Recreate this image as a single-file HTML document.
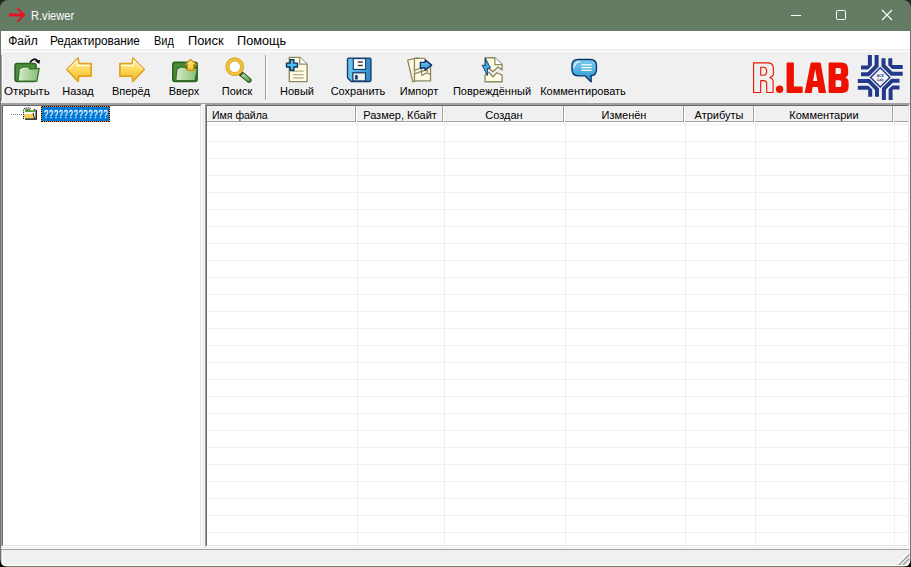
<!DOCTYPE html>
<html><head><meta charset="utf-8">
<style>
html,body{margin:0;padding:0;width:911px;height:567px;overflow:hidden;background:linear-gradient(#242424 0 50%,#000 50% 100%);}
*{box-sizing:border-box;}
.a{position:absolute;}
#win{position:absolute;left:0;top:0;width:911px;height:567px;border-radius:8px;overflow:hidden;background:#647c64;font-family:"Liberation Sans",sans-serif;}
.t{position:absolute;white-space:nowrap;color:#000;line-height:1;}
</style></head><body>
<div id="win">
  <!-- title bar -->
  <svg class="a" style="left:0;top:0" width="911" height="31">
    <g stroke="#e81123" fill="none">
      <line x1="9" y1="15" x2="23.5" y2="15" stroke-width="2.8"/>
      <polyline points="17.5,8.3 24.2,15 17.5,21.7" stroke-width="1.9"/>
    </g>
    <line x1="791" y1="15.5" x2="801" y2="15.5" stroke="#fff" stroke-width="1"/>
    <rect x="836.5" y="10.5" width="9" height="9" rx="1" fill="none" stroke="#fff" stroke-width="1"/>
    <g stroke="#fff" stroke-width="1.1"><line x1="882" y1="10" x2="892" y2="20"/><line x1="892" y1="10" x2="882" y2="20"/></g>
  </svg>
  <div class="t" style="left:30.8px;top:10px;font-size:12px;color:#fff;transform:scaleX(0.925);transform-origin:0 0">R.viewer</div>

  <!-- client -->
  <div class="a" style="left:1px;top:31px;width:909px;height:535px;background:#f0f0f0"></div>
  <!-- menu -->
  <div class="a" style="left:1px;top:31px;width:909px;height:18px;background:#fff"></div>
  <div class="a" style="left:1px;top:51px;width:909px;height:1px;background:#fff"></div>
  <div class="t" style="left:8.20px;top:35px;font-size:12px;transform:scaleX(1.000);transform-origin:0 0">Файл</div>
  <div class="t" style="left:50.42px;top:35px;font-size:12px;transform:scaleX(0.983);transform-origin:0 0">Редактирование</div>
  <div class="t" style="left:153.79px;top:35px;font-size:12px;transform:scaleX(0.910);transform-origin:0 0">Вид</div>
  <div class="t" style="left:187.53px;top:35px;font-size:12px;transform:scaleX(1.069);transform-origin:0 0">Поиск</div>
  <div class="t" style="left:236.94px;top:35px;font-size:12px;transform:scaleX(1.058);transform-origin:0 0">Помощь</div>

  <!-- toolbar bottom -->
  <div class="a" style="left:1px;top:103px;width:909px;height:1px;background:#a0a0a0"></div>
  <div class="a" style="left:1px;top:104px;width:909px;height:1px;background:#fff"></div>

  <!-- tree panel -->
  <div class="a" style="left:1px;top:104px;width:201px;height:443px;border-top:1px solid #a0a0a0;border-left:1px solid #a0a0a0;border-right:1px solid #fff;border-bottom:1px solid #fff;">
    <div class="a" style="left:0;top:0;right:0;bottom:0;border-top:1px solid #696969;border-left:1px solid #696969;border-right:1px solid #e3e3e3;border-bottom:1px solid #e3e3e3;background:#fff"></div>
  </div>
  <!-- list panel -->
  <div class="a" style="left:205px;top:104px;width:705px;height:443px;border-top:1px solid #a0a0a0;border-left:1px solid #a0a0a0;border-right:1px solid #fff;border-bottom:1px solid #fff;">
    <div class="a" style="left:0;top:0;right:0;bottom:0;border-top:1px solid #696969;border-left:1px solid #696969;border-right:1px solid #e3e3e3;border-bottom:1px solid #e3e3e3;background:#fff"></div>
  </div>
  <div class="a" style="left:1px;top:548px;width:909px;height:1px;background:#fafafa"></div>


  <div class="a" style="left:1px;top:55px;width:1px;height:46px;background:#a0a0a0"></div>
  <div class="a" style="left:2px;top:55px;width:1px;height:46px;background:#fff"></div>
  <div class="a" style="left:1px;top:101px;width:1px;height:2px;background:#fff"></div>
  <!-- toolbar labels -->
  <div class="t" style="left:3.8px;top:86px;font-size:11px;transform:scaleX(1.058);transform-origin:0 0">Открыть</div>
  <div class="t" style="left:18px;width:120px;text-align:center;top:86px;font-size:11px">Назад</div>
  <div class="t" style="left:71px;width:120px;text-align:center;top:86px;font-size:11px">Вперёд</div>
  <div class="t" style="left:124px;width:120px;text-align:center;top:86px;font-size:11px">Вверх</div>
  <div class="t" style="left:177px;width:120px;text-align:center;top:86px;font-size:11px">Поиск</div>
  <div class="t" style="left:237px;width:120px;text-align:center;top:86px;font-size:11px">Новый</div>
  <div class="t" style="left:298px;width:120px;text-align:center;top:86px;font-size:11px">Сохранить</div>
  <div class="t" style="left:359px;width:120px;text-align:center;top:86px;font-size:11px">Импорт</div>
  <div class="t" style="left:432px;width:120px;text-align:center;top:86px;font-size:11px">Повреждённый</div>
  <div class="t" style="left:523px;width:120px;text-align:center;top:86px;font-size:11px">Комментировать</div>
  <!-- separator -->
  <div class="a" style="left:265px;top:55px;width:1px;height:45px;background:#a0a0a0"></div>
  <div class="a" style="left:266px;top:55px;width:1px;height:45px;background:#fff"></div>

  <!-- list header -->
  <div class="a" style="left:207px;top:106px;width:701px;height:15px;background:#f0f0f0"></div>
  <div class="a" style="left:354px;top:106px;width:1px;height:14px;background:#f5f5f5"></div>
  <div class="a" style="left:208px;top:120px;width:147px;height:1px;background:#f5f5f5"></div>
  <div class="a" style="left:207px;top:106px;width:1px;height:16px;background:#fff"></div>
  <div class="a" style="left:355px;top:106px;width:1px;height:16px;background:#a0a0a0"></div>
  <div class="a" style="left:207px;top:121px;width:149px;height:1px;background:#a0a0a0"></div>
  <div class="a" style="left:441px;top:106px;width:1px;height:14px;background:#f5f5f5"></div>
  <div class="a" style="left:357px;top:120px;width:85px;height:1px;background:#f5f5f5"></div>
  <div class="a" style="left:356px;top:106px;width:1px;height:16px;background:#fff"></div>
  <div class="a" style="left:442px;top:106px;width:1px;height:16px;background:#a0a0a0"></div>
  <div class="a" style="left:357px;top:121px;width:86px;height:1px;background:#a0a0a0"></div>
  <div class="a" style="left:562px;top:106px;width:1px;height:14px;background:#f5f5f5"></div>
  <div class="a" style="left:444px;top:120px;width:119px;height:1px;background:#f5f5f5"></div>
  <div class="a" style="left:443px;top:106px;width:1px;height:16px;background:#fff"></div>
  <div class="a" style="left:563px;top:106px;width:1px;height:16px;background:#a0a0a0"></div>
  <div class="a" style="left:444px;top:121px;width:120px;height:1px;background:#a0a0a0"></div>
  <div class="a" style="left:682px;top:106px;width:1px;height:14px;background:#f5f5f5"></div>
  <div class="a" style="left:565px;top:120px;width:118px;height:1px;background:#f5f5f5"></div>
  <div class="a" style="left:564px;top:106px;width:1px;height:16px;background:#fff"></div>
  <div class="a" style="left:683px;top:106px;width:1px;height:16px;background:#a0a0a0"></div>
  <div class="a" style="left:565px;top:121px;width:119px;height:1px;background:#a0a0a0"></div>
  <div class="a" style="left:752px;top:106px;width:1px;height:14px;background:#f5f5f5"></div>
  <div class="a" style="left:685px;top:120px;width:68px;height:1px;background:#f5f5f5"></div>
  <div class="a" style="left:684px;top:106px;width:1px;height:16px;background:#fff"></div>
  <div class="a" style="left:753px;top:106px;width:1px;height:16px;background:#a0a0a0"></div>
  <div class="a" style="left:685px;top:121px;width:69px;height:1px;background:#a0a0a0"></div>
  <div class="a" style="left:891px;top:106px;width:1px;height:14px;background:#f5f5f5"></div>
  <div class="a" style="left:755px;top:120px;width:137px;height:1px;background:#f5f5f5"></div>
  <div class="a" style="left:754px;top:106px;width:1px;height:16px;background:#fff"></div>
  <div class="a" style="left:892px;top:106px;width:1px;height:16px;background:#a0a0a0"></div>
  <div class="a" style="left:755px;top:121px;width:138px;height:1px;background:#a0a0a0"></div>
  <div class="a" style="left:893px;top:106px;width:1px;height:16px;background:#fff"></div>
  <div class="a" style="left:894px;top:121px;width:14px;height:1px;background:#a0a0a0"></div>
  <svg class="a" style="left:207px;top:122px" width="701" height="423">
    <path d="M0 2.5H701M0 19.5H701M0 36.5H701M0 53.5H701M0 70.5H701M0 87.5H701M0 104.5H701M0 121.5H701M0 138.5H701M0 155.5H701M0 172.5H701M0 189.5H701M0 206.5H701M0 223.5H701M0 240.5H701M0 257.5H701M0 274.5H701M0 291.5H701M0 308.5H701M0 325.5H701M0 342.5H701M0 359.5H701M0 376.5H701M0 393.5H701M0 410.5H701M150.5 1V423M237.5 1V423M358.5 1V423M478.5 1V423M548.5 1V423M687.5 1V423" stroke="#f0f0f0" stroke-width="1" fill="none"/>
  </svg>
  <div class="t" style="left:212px;top:110px;font-size:11px;transform:scaleX(0.955);transform-origin:0 0">Имя файла</div>
  <div class="t" style="left:340px;width:120px;text-align:center;top:110px;font-size:11px">Размер, Кбайт</div>
  <div class="t" style="left:444px;width:120px;text-align:center;top:110px;font-size:11px">Создан</div>
  <div class="t" style="left:564px;width:120px;text-align:center;top:110px;font-size:11px">Изменён</div>
  <div class="t" style="left:659px;width:120px;text-align:center;top:110px;font-size:11px">Атрибуты</div>
  <div class="t" style="left:764px;width:120px;text-align:center;top:110px;font-size:11px">Комментарии</div>

  <!-- tree item -->
  <div class="a" style="left:11px;top:114px;width:1px;height:1px;background:#808080"></div>
  <div class="a" style="left:13px;top:114px;width:1px;height:1px;background:#808080"></div>
  <div class="a" style="left:15px;top:114px;width:1px;height:1px;background:#808080"></div>
  <div class="a" style="left:17px;top:114px;width:1px;height:1px;background:#808080"></div>
  <div class="a" style="left:19px;top:114px;width:1px;height:1px;background:#808080"></div>
  <div class="a" style="left:21px;top:114px;width:1px;height:1px;background:#404040"></div>
  <div class="a" style="left:41px;top:106px;width:69px;height:16px;background:#0078d7"></div>
  <div class="a" style="left:41px;top:106px;width:69px;height:1px;background:repeating-linear-gradient(90deg,#ff9020 0 1px,#000 1px 2px)"></div>
  <div class="a" style="left:41px;top:121px;width:69px;height:1px;background:repeating-linear-gradient(90deg,#ff9020 0 1px,#000 1px 2px)"></div>
  <div class="a" style="left:41px;top:106px;width:1px;height:16px;background:repeating-linear-gradient(180deg,#ff9020 0 1px,#000 1px 2px)"></div>
  <div class="a" style="left:109px;top:106px;width:1px;height:16px;background:repeating-linear-gradient(180deg,#ff9020 0 1px,#000 1px 2px)"></div>
  <div class="t" style="left:43.5px;top:109px;font-size:11px;color:#fff;letter-spacing:1.5px;transform:scaleX(0.65);transform-origin:0 0;-webkit-text-stroke:0.3px #fff">?????????????</div>
  <svg class="a" style="left:893px;top:547px" width="18" height="20">
    <path d="M15.6 6.4L4.6 17.4M15.6 10.4L8.6 17.4" stroke="#fff" stroke-width="1.3" fill="none"/>
    <path d="M16.3 7.6L5.6 18.3M16.3 11.6L9.6 18.3" stroke="#a0a0a0" stroke-width="1.5" fill="none"/>
  </svg>
  <svg width="0" height="0" style="position:absolute"><defs>
    <linearGradient id="gFront" x1="0" y1="0" x2="1" y2="0"><stop offset="0" stop-color="#d6eccb"/><stop offset="1" stop-color="#86bd72"/></linearGradient>
    <linearGradient id="gArrow" x1="0" y1="0" x2="0" y2="1"><stop offset="0" stop-color="#fff0a0"/><stop offset="0.5" stop-color="#fcd85a"/><stop offset="1" stop-color="#f2b92c"/></linearGradient>
    <linearGradient id="gBlue" x1="0" y1="0" x2="0" y2="1"><stop offset="0" stop-color="#7ccdf0"/><stop offset="1" stop-color="#2590cf"/></linearGradient>
    <linearGradient id="gBlueH" x1="0" y1="0" x2="1" y2="0"><stop offset="0" stop-color="#6cc8f0"/><stop offset="1" stop-color="#2a8cc8"/></linearGradient>
    <linearGradient id="gHandle" x1="0" y1="0" x2="1" y2="1"><stop offset="0" stop-color="#b8e0a0"/><stop offset="1" stop-color="#6aa858"/></linearGradient>
  </defs></svg>
  <svg class="a" style="left:12px;top:54px" width="32" height="32" viewBox="0 0 567 567"><rect x="55" y="168" width="370" height="318" rx="38" fill="#4b8b3a" stroke="#2c6420" stroke-width="30"/>
<path d="M128 275 L190 238 L290 238 L308 268 L482 255 L440 480 L105 480 Z" fill="url(#gFront)" stroke="#35702a" stroke-width="22" stroke-linejoin="round"/>
<path d="M135 285 L192 250 L285 250 L302 280" fill="none" stroke="#fff" stroke-width="14" opacity="0.9"/>
<path d="M318 150 Q392 50 455 125" fill="none" stroke="#111" stroke-width="32"/>
<path d="M412 128 L500 100 L484 178 Z" fill="#111"/></svg>
  <svg class="a" style="left:63px;top:54px" width="32" height="32" viewBox="0 0 567 567"><path d="M68 275 L268 72 L280 168 L498 168 L498 392 L280 392 L268 486 Z" fill="url(#gArrow)" stroke="#e2a21c" stroke-width="30" stroke-linejoin="round"/>
<path d="M95 272 L250 115 L262 205 L480 205" fill="none" stroke="#fff" stroke-width="20" opacity="0.85"/></svg>
  <svg class="a" style="left:116px;top:54px;transform:scaleX(-1)" width="32" height="32" viewBox="0 0 567 567"><path d="M68 275 L268 72 L280 168 L498 168 L498 392 L280 392 L268 486 Z" fill="url(#gArrow)" stroke="#e2a21c" stroke-width="30" stroke-linejoin="round"/>
<path d="M95 272 L250 115 L262 205 L480 205" fill="none" stroke="#fff" stroke-width="20" opacity="0.85"/></svg>
  <svg class="a" style="left:169px;top:54px" width="32" height="32" viewBox="0 0 567 567"><rect x="68" y="150" width="430" height="335" rx="38" fill="#4b8b3a" stroke="#2c6420" stroke-width="30"/>
<path d="M140 270 L200 232 L290 232 L305 260 L505 250 L458 472 L120 472 Z" fill="url(#gFront)" stroke="#35702a" stroke-width="22" stroke-linejoin="round"/>
<path d="M292 188 L380 98 L488 188 L438 188 L438 292 L326 292 L326 188 Z" fill="url(#gArrow)" stroke="#d08a10" stroke-width="22" stroke-linejoin="round"/></svg>
  <svg class="a" style="left:222px;top:54px" width="32" height="32" viewBox="0 0 567 567"><path d="M340 350 L478 466" stroke="#2a6020" stroke-width="92" stroke-linecap="round"/>
<path d="M350 360 L470 458" stroke="url(#gHandle)" stroke-width="56" stroke-linecap="round"/>
<path d="M318 335 L352 368" stroke="#2c3c30" stroke-width="84"/>
<circle cx="226" cy="226" r="130" fill="#fff" stroke="#e9b52a" stroke-width="66"/>
<circle cx="226" cy="226" r="160" fill="none" stroke="#d59c12" stroke-width="9"/>
<circle cx="226" cy="226" r="100" fill="none" stroke="#d9a31c" stroke-width="9"/>
<circle cx="226" cy="226" r="128" fill="none" stroke="#f9df7a" stroke-width="14" opacity="0.8"/></svg>
  <svg class="a" style="left:280px;top:52px" width="32" height="32" viewBox="0 0 567 567"><path d="M165 95 L350 95 L480 215 L480 525 L165 525 Z" fill="#fffbe2" stroke="#8c8a66" stroke-width="24" stroke-linejoin="round"/>
<path d="M350 95 L350 215 L480 215" fill="#fff" stroke="#8c8a66" stroke-width="22" stroke-linejoin="round"/>
<path d="M230 340H420M230 402H420M230 460H420" stroke="#b6b48e" stroke-width="24"/>
<path d="M180 135 H245 V198 H310 V265 H245 V328 H180 V265 H115 V198 H180 Z" fill="#4cc0ea" stroke="#0d2f5e" stroke-width="24" stroke-linejoin="round"/></svg>
  <svg class="a" style="left:343px;top:53px" width="32" height="32" viewBox="0 0 567 567"><path d="M100 90 H470 Q495 90 495 115 V480 Q495 505 470 505 H145 L80 440 V110 Q80 90 100 90 Z" fill="url(#gBlueH)" stroke="#17386a" stroke-width="24" stroke-linejoin="round"/>
<rect x="182" y="100" width="220" height="190" fill="#fff" stroke="#17386a" stroke-width="20"/>
<path d="M262 160H352M262 222H352" stroke="#444" stroke-width="26"/>
<rect x="175" y="350" width="225" height="145" fill="#eeeeee" stroke="#17386a" stroke-width="22"/>
<rect x="215" y="392" width="45" height="78" fill="#17386a"/></svg>
  <svg class="a" style="left:404px;top:53px" width="32" height="32" viewBox="0 0 567 567"><path d="M65 125 L240 85 L315 450 L155 512 Z" fill="#fffbe2" stroke="#8c8a66" stroke-width="24" stroke-linejoin="round"/>
<path d="M185 95 L360 95 L470 205 L470 495 L185 495 Z" fill="#fffbe2" stroke="#8c8a66" stroke-width="24" stroke-linejoin="round"/>
<path d="M190 310 L300 265 L320 330 L400 290 L420 340" fill="none" stroke="#8c8a66" stroke-width="22"/>
<path d="M190 370 L300 325 L320 395 L400 355 L470 380" fill="none" stroke="#8c8a66" stroke-width="22"/>
<path d="M290 165 H375 V125 L490 215 L375 305 V265 H290 Z" fill="url(#gBlue)" stroke="#12306a" stroke-width="24" stroke-linejoin="round"/></svg>
  <svg class="a" style="left:476px;top:53px" width="32" height="32" viewBox="0 0 567 567"><path d="M160 85 L335 85 L462 200 L462 300 L390 250 L300 330 L220 270 L160 300 Z" fill="#fffbe2" stroke="#8c8a66" stroke-width="24" stroke-linejoin="round"/>
<path d="M335 85 L335 205 L462 205" fill="#fff" stroke="#8c8a66" stroke-width="22" stroke-linejoin="round"/>
<path d="M160 390 L230 340 L300 420 L370 350 L462 390 L462 510 L160 510 Z" fill="#fffbe2" stroke="#8c8a66" stroke-width="24" stroke-linejoin="round"/>
<path d="M166 92 L258 267 L205 272 L200 400 L110 214 L165 222 Z" fill="#3ab0e6" stroke="#0e2e5a" stroke-width="15" stroke-linejoin="round"/></svg>
  <svg class="a" style="left:568px;top:53px" width="32" height="32" viewBox="0 0 567 567"><path d="M180 115 H395 Q505 115 505 230 V290 Q505 405 395 405 H410 V512 L300 405 H180 Q70 405 70 290 V230 Q70 115 180 115 Z" fill="url(#gBlue)" stroke="#0e3466" stroke-width="24" stroke-linejoin="round"/>
<path d="M105 265 Q115 160 215 148" fill="none" stroke="#fff" stroke-width="22" opacity="0.85"/>
<path d="M235 210H420M235 258H420M235 306H420" stroke="#fff" stroke-width="22"/></svg>
  <svg class="a" style="left:18px;top:102px" width="24" height="24" viewBox="0 0 567 567">
<path d="M165 245 V185 Q172 160 200 160 H272 L302 195 H405 V245 Z" fill="#5a9a3c"/>
<rect x="130" y="245" width="232" height="40" fill="#fff"/>
<path d="M135 285 H352 L388 394 H165 Z" fill="#f6d050"/>
<path d="M430 188 V406 H168" fill="none" stroke="#000" stroke-width="30"/>
<path d="M356 262 L392 398" stroke="#000" stroke-width="22"/>
<path d="M132 400 V178 L162 140 H280 L312 168" fill="none" stroke="#000" stroke-width="24" stroke-dasharray="26 22"/>
<path d="M372 172 L412 178" stroke="#000" stroke-width="22"/>
</svg>

  <!-- R.LAB logo -->
  <svg class="a" style="left:0;top:0" width="911" height="104">
    <path d="M753.6 62.9 L768.5 62.9 Q773.4 63.2 773.4 68.6 L773.4 74.2 Q773.2 76.3 769.8 77.4 Q773.1 78.6 773.1 81.2 L773.1 92.5 L766.7 92.5 L766.7 82.8 Q766.4 80.6 763.2 80.6 L760.7 80.6 L760.7 92.5 L753.6 92.5 Z M760.7 67.2 L763.2 67.2 Q766.7 67.4 766.7 71.2 Q766.7 75.2 763.2 75.3 L760.7 75.3 Z" fill="none" stroke="#ee1100" stroke-width="1.1" stroke-linejoin="round"/>
    <circle cx="779.6" cy="89.2" r="3.7" fill="#ee1100"/>
    <path d="M786.6 63.6 Q786.6 62.6 787.6 62.6 L793 62.6 Q793.9 62.6 793.9 63.6 L793.9 86.5 L801.8 86.5 Q802.7 86.5 802.7 87.5 L802.7 92 Q802.7 92.9 801.8 92.9 L787.6 92.9 Q786.6 92.9 786.6 92 Z" fill="#ee1100"/>
    <path d="M804.6 92.9 L810.6 63.4 Q810.8 62.6 811.6 62.6 L819.8 62.6 Q820.6 62.6 820.8 63.4 L826.1 92.9 L818.7 92.9 L817.8 87.1 L812.6 87.1 L811.7 92.9 Z M815.2 69.3 L813.1 81 L817.3 81 Z" fill="#ee1100" fill-rule="evenodd"/>
    <path d="M828.6 63.6 Q828.6 62.6 829.6 62.6 L841.5 62.6 Q848.2 62.8 848.2 69.5 L848.2 73.2 Q848.1 76.6 845.2 77.5 Q848.6 78.6 848.6 82.5 L848.6 87 Q848.6 92.9 842 92.9 L829.6 92.9 Q828.6 92.9 828.6 92 Z M835.6 67.9 L839.4 67.9 Q840.9 67.9 840.9 69.4 L840.9 72.4 Q840.9 73.9 839.4 73.9 L835.6 73.9 Z M835.6 80.2 L839.8 80.2 Q841.3 80.2 841.3 81.7 L841.3 85.4 Q841.3 86.9 839.8 86.9 L835.6 86.9 Z" fill="#ee1100" fill-rule="evenodd"/>
    <path d="M867.90 55.00 L871.90 55.00 L871.90 65.60 L868.10 69.40 L861.00 69.40 L861.00 65.40 L867.90 65.40Z M874.60 55.00 L874.60 65.30 L867.70 72.20 L861.00 72.20 L861.00 76.20 L869.20 76.20 L878.60 66.80 L878.60 55.00Z M902.70 65.10 L902.70 69.10 L892.10 69.10 L888.30 65.30 L888.30 58.20 L892.30 58.20 L892.30 65.10Z M902.70 71.80 L892.40 71.80 L885.50 64.90 L885.50 58.20 L881.50 58.20 L881.50 66.40 L890.90 75.80 L902.70 75.80Z M892.60 99.90 L888.60 99.90 L888.60 89.30 L892.40 85.50 L899.50 85.50 L899.50 89.50 L892.60 89.50Z M885.90 99.90 L885.90 89.60 L892.80 82.70 L899.50 82.70 L899.50 78.70 L891.30 78.70 L881.90 88.10 L881.90 99.90Z M857.80 89.80 L857.80 85.80 L868.40 85.80 L872.20 89.60 L872.20 96.70 L868.20 96.70 L868.20 89.80Z M857.80 83.10 L868.10 83.10 L875.00 90.00 L875.00 96.70 L879.00 96.70 L879.00 88.50 L869.60 79.10 L857.80 79.10Z " fill="#233a8c"/>
    <path d="M880.25 67.85000000000001 L889.85 77.45 L880.25 87.05 L870.65 77.45 Z" fill="#f2f2f2" stroke="#233a8c" stroke-width="1.45"/>
    <text x="880.25" y="76.95" font-family="Liberation Sans" font-size="3.4" font-weight="bold" fill="#233a8c" text-anchor="middle">ACE</text>
    <text x="880.25" y="80.95" font-family="Liberation Sans" font-size="3.4" font-weight="bold" fill="#233a8c" text-anchor="middle">Lab</text>
  </svg>
  <!-- status bar -->
  <div class="a" style="left:1px;top:549px;width:908px;height:1px;background:#a0a0a0"></div>
  <div class="a" style="left:1px;top:550px;width:1px;height:15px;background:#c8c8c8"></div>
  <div class="a" style="left:2px;top:550px;width:1px;height:15px;background:#fff"></div>
  <div class="a" style="left:1px;top:565px;width:909px;height:1px;background:#fff"></div>
</div>
</body></html>
